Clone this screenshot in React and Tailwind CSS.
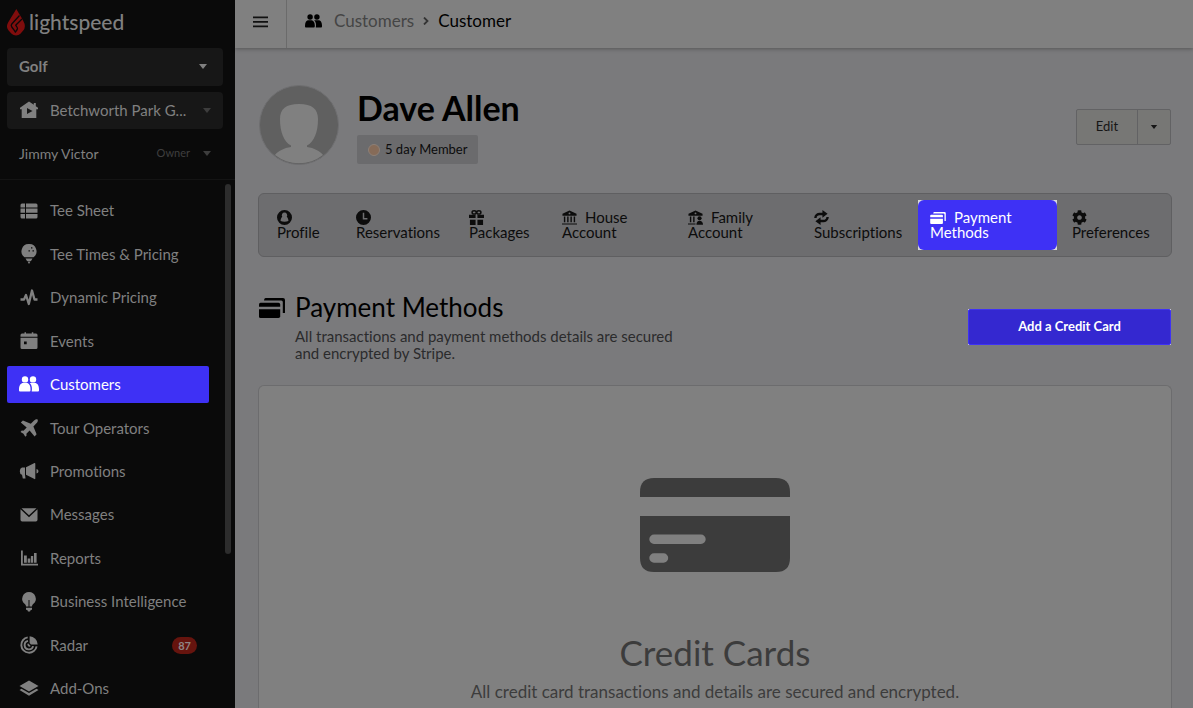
import React from "react";
import { FaCog } from "react-icons/fa";

function Svg({ box = "0 0 18 18", className, children }) {
  return (
    <svg viewBox={box} fill="currentColor" aria-hidden="true" className={className}>
      {children}
    </svg>
  );
}

const CaretDown = ({ className }) => (
  <Svg box="0 0 8 5" className={className}>
    <path d="M0 0h8L4 5z" />
  </Svg>
);

const People = ({ className }) => (
  <Svg box="0 0 20 16" className={className}>
    <circle cx="6" cy="3.4" r="3.2" />
    <circle cx="14" cy="3.4" r="3.2" />
    <path d="M0 13c0-3.800 2-6 4-6h3.800c2 0 3.700 2.500 3.700 6v1.500q0 1-1 1H1q-1 0-1-1z" />
    <path d="M10.800 7H16c2.200 0 4 2.200 4 6v1.500q0 1-1 1h-6.300c.6-3 .3-6.500-1.900-8.500z" />
  </Svg>
);

const House = ({ className }) => (
  <Svg className={className}>
    <path fillRule="evenodd" d="M9 .5 0 6.700v1.500h1.700V17H7v-4l5.500-3L7 7v10h9.300V8.200H18V6.700l-2.200-1.500V2h-2v1.800z" />
  </Svg>
);

const TeeSheet = ({ className }) => (
  <Svg className={className}>
    <path d="M2 1.500h3v4H.5V3q0-1.500 1.500-1.500zM6 1.500h10q1.500 0 1.500 1.500v2.500H6zM.5 6.500H5v4.300H.5zM6 6.500h11.500v4.300H6zM.5 12H5v4.500H2Q.5 16.500.5 15zM6 12h11.500v3q0 1.500-1.500 1.500H6z" />
  </Svg>
);

const GolfTee = ({ className }) => (
  <Svg box="0 0 18 20" className={className}>
    <path fillRule="evenodd" d="M9 0a7.300 7.300 0 0 1 4.500 13.200h-9A7.300 7.300 0 0 1 9 0zm2 3.200v1.400h1.400V3.200zm-2.500 3v1.400h1.400V6.200zm4 0v1.400h1.400V6.200z" />
    <path d="M5.500 14.500h7L11 17H7zM7.500 17.500h3L9 20z" />
  </Svg>
);

const Pulse = ({ className }) => (
  <Svg className={className}>
    <path d="M.5 11.500H4l2-4.500 2.800 9L12 2.500l2.500 9h3" fill="none" stroke="currentColor" strokeWidth="2.300" strokeLinejoin="round" />
  </Svg>
);

const Calendar = ({ className }) => (
  <Svg className={className}>
    <path d="M2 1.500h2.500V.3H6v1.200h5.800V.3h1.500v1.200H16q1.500 0 1.500 1.500v1.800H.5V3Q.5 1.500 2 1.500z" />
    <path fillRule="evenodd" d="M.5 5.800h17v9.700q0 1.500-1.500 1.500H2q-1.500 0-1.500-1.500zM4 9.500v2.700h2.700V9.500z" />
  </Svg>
);

const Airplane = ({ className }) => (
  <Svg className={className}>
    <path d="M17.600.4c.6 1.300-.1 2.800-1.200 3.900l-3 3.100 3.200 7.800-2 2.200-5-5.900-3.200 3.200.2 1.700-1.300 1.300-1.800-3-3-1.800 1.300-1.300 1.700.2 3.200-3.200L.8 3.600l2.100-2 7.900 3.100 3-3C14.900.6 16.300-.1 17.600.4z" />
  </Svg>
);

const Megaphone = ({ className }) => (
  <Svg box="0 0 20 18" className={className}>
    <path d="M3 5.500h3v7.300l.5 3.700H3.800L3 12.800Q.8 12.300.8 9.200T3 5.500zM7 5.200 15.500 1q.8-.2.8.7v14.800q0 .9-.8.6L7 12.800zM17.500 7q2 .4 2 2.200t-2 2.200z" />
  </Svg>
);

const Envelope = ({ className }) => (
  <Svg className={className}>
    <path d="M1.500 2.200h15L9 9.300z" />
    <path d="M.5 3.200 9 11.300l8.500-8.100v10.600q0 1.700-1.700 1.700H2.200q-1.700 0-1.700-1.700z" />
  </Svg>
);

const Bars = ({ className }) => (
  <Svg className={className}>
    <path d="M1 1.500h1.800v13.200H18v1.800H1zM4 6.500h2.800v7.300H4zM7.700 9.500h2.600v4.300H7.700zM10.900 7h2.300v6.800h-2.300zM14 4h2.600v9.800H14z" />
  </Svg>
);

const Bulb = ({ className }) => (
  <Svg box="0 0 18 20" className={className}>
    <path fillRule="evenodd" d="M9 0a6.800 6.800 0 0 1 4.200 12.100c-.8.7-1.200 1.400-1.200 2.400H6c0-1-.4-1.700-1.200-2.400A6.800 6.800 0 0 1 9 0zm-.5 8v6.500h1V8z" />
    <path d="M6 15.700h6v1.200q0 1.200-1.300 1.200L10 19.500H8l-.7-1.400Q6 18.100 6 16.900z" />
  </Svg>
);

const RadarIcon = ({ className }) => (
  <Svg className={className}>
    <path d="M9.600.3a8.500 8.500 0 0 1 8.100 8.200H11L9.600 7z" />
    <g fill="none" stroke="currentColor" strokeWidth="1.900">
      <path d="M7.700 1.400a7.700 7.700 0 1 0 8.900 8.900" />
      <path d="M8 4.900a4.300 4.300 0 1 0 5.100 5.200" />
    </g>
    <path d="M8 7.300 10.700 10a1.800 1.800 0 1 1-2.700-2.700z" />
  </Svg>
);

const Layers = ({ className }) => (
  <Svg box="0 0 20 18" className={className}>
    <path d="M10 1.500 19.500 7 10 12.500.5 7z" />
    <path d="M2.500 9.700 10 14l7.500-4.300 2 1.300L10 16.700.5 11z" />
  </Svg>
);

const Profile = ({ className }) => (
  <Svg box="0 0 16 16" className={className}>
    <path fillRule="evenodd" d="M8 0a8 8 0 1 1 0 16A8 8 0 0 1 8 0zm0 2.700a2.900 2.900 0 0 0-2.400 4.500C4.500 8 4 9.500 3.800 11.800q2 .7 4.200.7t4.200-.7c-.2-2.300-.7-3.800-1.800-4.600A2.900 2.900 0 0 0 8 2.700z" />
  </Svg>
);

const Clock = ({ className }) => (
  <Svg box="0 0 16 16" className={className}>
    <path fillRule="evenodd" d="M8 0a8 8 0 1 1 0 16A8 8 0 0 1 8 0zM7.200 3v7h5V8.400H8.800V3z" />
  </Svg>
);

const Gift = ({ className }) => (
  <Svg box="0 0 16 16" className={className}>
    <path d="M0 5h7v3.500H0zM9 5h7v3.500H9zM1 10.500h6V16H1zM9 10.500h6V16H9z" />
    <g fill="none" stroke="currentColor" strokeWidth="1.600">
      <ellipse cx="5.500" cy="2.600" rx="2.200" ry="1.700" />
      <ellipse cx="10.500" cy="2.600" rx="2.200" ry="1.700" />
    </g>
  </Svg>
);

const Bank = ({ className }) => (
  <Svg box="0 0 16 16" className={className}>
    <path fillRule="evenodd" d="M8 .5 15.500 4v2H.5V4zM8 2.600a1 1 0 1 0 0 2 1 1 0 0 0 0-2z" />
    <path d="M2 7h1.500v6H2zM5.500 7H7v6H5.500zM9 7h1.500v6H9zM12.500 7H14v6h-1.500zM0 14.300h16v1.200H0z" />
  </Svg>
);

const BankUser = ({ className }) => (
  <Svg box="0 0 16 16" className={className}>
    <path fillRule="evenodd" d="M8 .5 15.500 4v2H.5V4zM8 2.600a1 1 0 1 0 0 2 1 1 0 0 0 0-2z" />
    <path d="M2 7h1.500v6H2zM5.500 7H7v6H5.500zM0 14.300h8v1.200H0z" />
    <circle cx="12.300" cy="8.800" r="2.200" />
    <path d="M9 15.700c0-3 1.300-4.200 3.300-4.200s3.700 1.200 3.700 4.200z" />
  </Svg>
);

const Sync = ({ className }) => (
  <Svg box="0 0 16 16" className={className}>
    <g fill="none" stroke="currentColor" strokeWidth="2.600">
      <path d="M1.500 8.500C1.500 5.500 4 4.200 6 4.200h4" />
      <path d="M14.500 7.500c0 3-2.500 4.300-4.500 4.300H6" />
    </g>
    <path d="M9 0l5.500 4L9 8.200zM7 7.800 1.500 12 7 16z" />
  </Svg>
);

const Cards = ({ className }) => (
  <Svg box="0 0 26 20" className={className}>
    <path d="M6.500 0H24q2 0 2 2v12.500q0 .5-.5.500h-1.700V4q0-1.500-1.500-1.500H5q0-2.500 1.500-2.500z" />
    <path d="M1.500 4.700h18q1.700 0 1.700 1.700v2.300H0V6.200q0-1.500 1.500-1.500z" />
    <path d="M0 11.300h21.200v7q0 1.700-1.700 1.700h-18Q0 20 0 18.500z" />
  </Svg>
);

const Flame = ({ className }) => (
  <Svg box="0 0 18 27" className={className}>
    <path d="M9.300 0 13 6.200l1 1.600 2.300 4.200q3.300 5.800-.3 9.800l-2.600 3q-1.700 1.800-4.400 1.800t-4.400-1.800l-3-3.300q-3-3.500-.5-8z" />
    <g fill="none" stroke="#0a0a0a" strokeWidth="1.300" strokeLinejoin="round">
      <path d="M12.500 6.500 4.800 15q-1.200 1.400 0 3l3.600 4.800" />
      <path d="M15 10 8.700 16.200l1.500 2.300q.6 1 0 2L8 23.500" />
    </g>
  </Svg>
);

const navItems = [
  { label: "Tee Sheet", Icon: TeeSheet },
  { label: "Tee Times & Pricing", Icon: GolfTee, iconClass: "size-5" },
  { label: "Dynamic Pricing", Icon: Pulse },
  { label: "Events", Icon: Calendar },
  { label: "Customers", Icon: People, iconClass: "h-4 w-5", active: true },
  { label: "Tour Operators", Icon: Airplane },
  { label: "Promotions", Icon: Megaphone, iconClass: "h-[18px] w-5" },
  { label: "Messages", Icon: Envelope },
  { label: "Reports", Icon: Bars },
  { label: "Business Intelligence", Icon: Bulb, iconClass: "size-5" },
  { label: "Radar", Icon: RadarIcon, badge: "87" },
  { label: "Add-Ons", Icon: Layers, iconClass: "h-[18px] w-5" },
];

const tabs = [
  { label: "Profile", Icon: Profile },
  { label: "Reservations", Icon: Clock },
  { label: "Packages", Icon: Gift },
  { label: "House Account", Icon: Bank },
  { label: "Family Account", Icon: BankUser },
  { label: "Subscriptions", Icon: Sync },
  { label: "Payment Methods", Icon: Cards, active: true },
  { label: "Preferences", Icon: FaCog },
];

function Sidebar() {
  return (
    <aside className="sticky top-0 flex h-screen w-[235px] shrink-0 flex-col overflow-hidden bg-[#0a0a0a] text-[#808080]">
      <a href="#home" className="flex h-12 shrink-0 items-center gap-1 pb-1 pl-[7px]">
        <Flame className="h-[27px] w-[18px] text-[#800d0d]" />
        <span className="text-[21px] leading-6 font-medium">lightspeed</span>
      </a>

      <div className="flex flex-col gap-[6px] pr-3 pl-[7px]">
        <div className="relative">
          <select aria-label="Product" className="h-[38px] w-full appearance-none rounded-sm bg-[#171717] px-3 pb-[2px] text-[15px] font-bold">
            <option>Golf</option>
          </select>
          <CaretDown className="pointer-events-none absolute top-4 right-4 h-[5px] w-2" />
        </div>
        <div className="relative">
          <House className="pointer-events-none absolute top-[9px] left-[13px] size-[18px]" />
          <select aria-label="Facility" className="h-[37px] w-full appearance-none rounded-sm bg-[#171717] pr-8 pl-[43px] text-[15px]">
            <option>Betchworth Park G...</option>
          </select>
          <CaretDown className="pointer-events-none absolute top-4 right-3 h-[5px] w-2 text-[#3d3d3d]" />
        </div>
      </div>

      <button className="flex h-[50px] shrink-0 items-center pr-6 pb-[2px] pl-[19px] text-[14px]">
        <span>Jimmy Victor</span>
        <span className="ml-auto text-[11px] text-[#3f3f3f]">Owner</span>
        <CaretDown className="ml-[13px] h-[5px] w-2 text-[#3d3d3d]" />
      </button>

      <div className="flex min-h-0 flex-1 border-t border-[#141414]">
        <nav aria-label="Main" className="min-w-0 flex-1 pt-3 pr-4 pl-[7px]">
          <ul className="flex h-full max-h-[515px] flex-col justify-between">
            {navItems.map(({ label, Icon, iconClass = "size-[18px]", active, badge }) => (
              <li key={label} className="shrink-0">
                <a
                  href="#nav"
                  aria-current={active ? "page" : undefined}
                  className={`flex h-[37px] items-center gap-[11px] rounded-xs px-3 text-[15px] ${active ? "bg-[#3e31f5] text-white" : ""}`}
                >
                  <span className="flex size-5 shrink-0 items-center justify-center">
                    <Icon className={iconClass} />
                  </span>
                  <span className="whitespace-nowrap">{label}</span>
                  {badge && (
                    <span className="ml-auto rounded-full bg-[#66140e] px-[6px] text-[11px] leading-[17px] font-bold text-[#8f8585]">
                      {badge}
                    </span>
                  )}
                </a>
              </li>
            ))}
          </ul>
        </nav>
        <div className="mt-1 mr-1 h-[370px] w-[6px] shrink-0 rounded-full bg-[#2d2d2d]" />
      </div>
    </aside>
  );
}

function TopBar() {
  return (
    <header className="z-10 flex h-12 items-stretch bg-[#808080] shadow-[0_1px_4px_rgba(0,0,0,0.3)]">
      <button aria-label="Toggle menu" className="flex w-[52px] items-center justify-center border-r border-[#6b6b6b] pb-1 text-[#111]">
        <Svg box="0 0 15 12" className="h-3 w-[15px]">
          <path d="M0 .5h15v1.800H0zM0 5h15v1.800H0zM0 9.500h15v1.800H0z" />
        </Svg>
      </button>
      <nav aria-label="Breadcrumb" className="flex items-center pb-[6px] pl-[18px] text-[17px]">
        <People className="h-[14px] w-[17px] text-black" />
        <a href="#customers" className="ml-3 text-[#454545]">Customers</a>
        <Svg box="0 0 6 8" className="mx-[9px] h-2 w-[6px] text-[#333]">
          <path d="m1 .5 3.500 3.500L1 7.500" fill="none" stroke="currentColor" strokeWidth="1.800" />
        </Svg>
        <span className="text-black">Customer</span>
      </nav>
    </header>
  );
}

function CustomerHeader() {
  return (
    <section className="flex items-start px-px">
      <Svg box="0 0 80 80" className="size-20 shrink-0">
        <circle cx="40" cy="40" r="39.500" fill="#606060" stroke="#6f6f71" />
        <path fill="#808080" d="M40 19c13 0 19 5 19 15 0 13-4 23-11 26.500v1.500c7 1 13 4 16 8a39 39 0 0 1-48 0C19 66 25 63 32 62v-1.500C25 57 21 47 21 34c0-10 6-15 19-15z" />
      </Svg>
      <div className="ml-[18px]">
        <h1 className="text-[34px] leading-[46px] font-bold text-black">Dave Allen</h1>
        <p className="mt-1 flex h-[29px] w-fit items-center gap-[5px] rounded-xs bg-[#6b6b6d] px-[11px] text-[13px] text-[#0c0c0c]">
          <span className="size-3 rounded-full border border-[#8d8077] bg-[#866b58]" />
          5 day Member
        </p>
      </div>
      <div className="mt-6 ml-auto flex h-9 rounded-xs border border-[#626264] bg-[#777775] text-[#161616]">
        <button className="w-[61px] border-r border-[#626264] text-[13px]">Edit</button>
        <button aria-label="More actions" className="flex w-8 items-center justify-center">
          <CaretDown className="h-1 w-2" />
        </button>
      </div>
    </section>
  );
}

function Tabs() {
  return (
    <nav aria-label="Customer sections" className="mt-7 rounded-md border border-[#5f5f61] bg-[#6d6d6f] p-[6px]">
      <ul className="grid grid-cols-[76fr_110fr_90fr_123fr_123fr_113fr_139fr_105fr] gap-[3px]">
        {tabs.map(({ label, Icon, active }) => (
          <li key={label} className={active ? "bg-[#d8d8dc]" : ""}>
            <a
              href="#tab"
              aria-current={active ? "page" : undefined}
              className={`flex h-[50px] items-center rounded-md pl-3 text-[15px] leading-[15px] ${active ? "bg-[#3e31f5] pr-3 text-white" : "pr-2 text-[#0c0c0c]"}`}
            >
              <span className="block">
                <Icon className={`mr-2 inline-block ${active ? "h-3 w-4 align-[-1px]" : "size-[15px] align-[-2px]"}`} />
                {label}
              </span>
            </a>
          </li>
        ))}
      </ul>
    </nav>
  );
}

function PaymentMethods() {
  return (
    <>
      <section className="mt-[34px] flex items-start px-px">
        <Cards className="mt-[7px] h-5 w-[26px] shrink-0 text-black" />
        <div className="ml-[10px] w-[390px]">
          <h2 className="text-[26px] leading-8 text-black">Payment Methods</h2>
          <p className="mt-[5px] text-[15px] leading-[17px] text-[#2b2b2c]">
            All transactions and payment methods details are secured and encrypted by Stripe.
          </p>
        </div>
        <div className="mt-[18px] ml-auto bg-[#d8d8dc]">
          <button className="h-9 w-[203px] rounded-xs border border-[#3e31f5] bg-[#3428d0] text-[13px] font-bold text-white">
            Add a Credit Card
          </button>
        </div>
      </section>

      <section className="mt-[23px] flex flex-1 flex-col items-center rounded-t-md border border-b-0 border-[#6c6c6e] bg-[#808080] pt-[92px] text-center text-[#3c3c3c]">
        <Svg box="0 0 150 94" className="h-[94px] w-[150px]">
          <path d="M14 0h122q14 0 14 14v5H0v-5Q0 0 14 0z" />
          <path
            fillRule="evenodd"
            d="M0 38h150v42q0 14-14 14H14Q0 94 0 80zM14 56.500a4.700 4.700 0 0 0 0 9.400h47a4.700 4.700 0 0 0 0-9.400zM14 75.300a4.700 4.700 0 0 0 0 9.400h9.500a4.700 4.700 0 0 0 0-9.400z"
          />
        </Svg>
        <h3 className="mt-[58px] text-[35px] leading-[44px]">Credit Cards</h3>
        <p className="mt-2 text-[17px] leading-5">All credit card transactions and details are secured and encrypted.</p>
      </section>
    </>
  );
}

export default function App() {
  return (
    <div className="flex min-h-screen bg-[#7a7a7c] font-['Lato',sans-serif] [font-variant-ligatures:none]">
      <Sidebar />
      <div className="flex min-w-0 flex-1 flex-col">
        <TopBar />
        <main className="flex flex-1 flex-col pt-[37px] pr-[21px] pl-[23px]">
          <CustomerHeader />
          <Tabs />
          <PaymentMethods />
        </main>
      </div>
    </div>
  );
}
